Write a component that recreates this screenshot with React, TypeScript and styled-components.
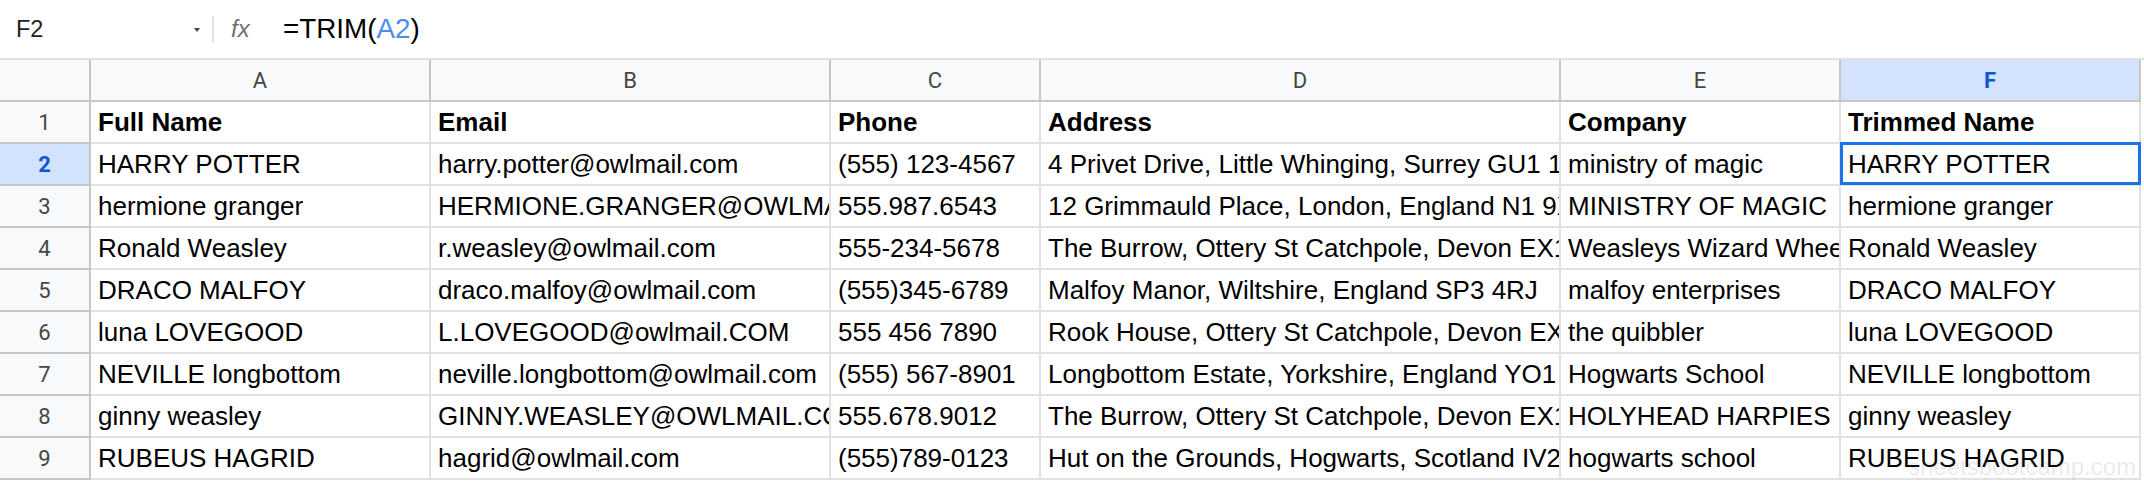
import React from "react";
import styled, { createGlobalStyle, css } from "styled-components";

const GlobalStyle = createGlobalStyle`
  html, body { margin: 0; padding: 0; background: #ffffff; }
  body { font-family: "Liberation Sans", Arial, sans-serif; }
  * { box-sizing: border-box; }
`;

const Page = styled.div`
  position: relative;
  width: 2144px;
  height: 484px;
  overflow: hidden;
  background: #ffffff;
`;

const Toolbar = styled.div`
  display: flex;
  align-items: center;
  height: 60px;
  border-bottom: 2px solid #e1e3e1;
`;

const NameBox = styled.div`
  display: flex;
  align-items: center;
  justify-content: space-between;
  width: 212px;
  padding: 0 12px 0 16px;
  font-family: "Liberation Sans", Arial, sans-serif;
  font-size: 23.5px;
  color: #1f1f1f;
`;

const Caret = styled.span`
  width: 0;
  height: 0;
  border-left: 3px solid transparent;
  border-right: 3px solid transparent;
  border-top: 4px solid #444746;
  margin-top: 1px;
`;

const Divider = styled.div`
  width: 2px;
  height: 27px;
  background: #e1e3e1;
`;

const FxLabel = styled.span`
  margin-left: 17px;
  width: 52px;
  font-family: "Liberation Sans", Arial, sans-serif;
  font-style: italic;
  font-size: 24px;
  color: #6f7370;
`;

const FormulaText = styled.span`
  font-family: "Liberation Sans", Arial, sans-serif;
  font-size: 27.8px;
  color: #000000;
`;

const RefToken = styled.span`
  color: #4a8df0;
`;

const Sheet = styled.div`
  display: grid;
  grid-template-columns: 91px 340px 400px 210px 520px 280px 300px;
  grid-auto-rows: 42px;
`;

const headerBase = css`
  background: #f8f9fa;
  border-right: 2px solid #c4c7c5;
  border-bottom: 2px solid #c4c7c5;
  font-family: Roboto, "Liberation Sans", sans-serif;
  font-size: 22px;
  color: #444746;
  display: flex;
  align-items: center;
  justify-content: center;
`;

const Corner = styled.div`
  ${headerBase};
`;

const ColHeader = styled.div<{ $active?: boolean }>`
  ${headerBase};
  ${(p) =>
    p.$active &&
    css`
      background: #d3e3fd;
      color: #0b57d0;
      font-weight: 700;
    `}
`;

const RowHeader = styled.div<{ $active?: boolean }>`
  ${headerBase};
  ${(p) =>
    p.$active &&
    css`
      background: #d3e3fd;
      color: #0b57d0;
      font-weight: 700;
    `}
`;

const Cell = styled.div<{ $bold?: boolean; $selected?: boolean }>`
  position: relative;
  display: flex;
  align-items: center;
  padding: 0 7px;
  border-right: 2px solid #e1e1e1;
  border-bottom: 2px solid #e1e1e1;
  font-family: "Liberation Sans", Arial, sans-serif;
  font-size: 26px;
  font-weight: ${(p) => (p.$bold ? 700 : 400)};
  color: #000000;
  white-space: nowrap;
  overflow: ${(p) => (p.$selected ? "visible" : "hidden")};
  ${(p) =>
    p.$selected &&
    css`
      z-index: 2;
      &::after {
        content: "";
        position: absolute;
        top: -2px;
        left: -1px;
        right: -2px;
        bottom: -1px;
        border: 3px solid #1a73e8;
        pointer-events: none;
      }
    `}
`;

const CellText = styled.span`
  overflow: hidden;
`;

const FillHandle = styled.span`
  position: absolute;
  right: 1px;
  bottom: 2px;
  width: 4px;
  height: 4px;
  background: #ffffff;
  border-radius: 1px 0 0 0;
  z-index: 3;
`;

const Watermark = styled.div`
  position: absolute;
  left: 1908px;
  top: 453px;
  font-family: "Liberation Sans", Arial, sans-serif;
  font-size: 24px;
  color: rgba(120, 120, 120, 0.16);
  white-space: nowrap;
  pointer-events: none;
`;

const columns = ["A", "B", "C", "D", "E", "F"];

const headerRow = ["Full Name", "Email", "Phone", "Address", "Company", "Trimmed Name"];

const rows: string[][] = [
  ["HARRY POTTER", "harry.potter@owlmail.com", "(555) 123-4567", "4 Privet Drive, Little Whinging, Surrey GU1 1AA", "ministry of magic", "HARRY POTTER"],
  ["hermione granger", "HERMIONE.GRANGER@OWLMAIL.COM", "555.987.6543", "12 Grimmauld Place, London, England N1 9XY", "MINISTRY OF MAGIC", "hermione granger"],
  ["Ronald Weasley", "r.weasley@owlmail.com", "555-234-5678", "The Burrow, Ottery St Catchpole, Devon EX11 1AA", "Weasleys Wizard Wheezes", "Ronald Weasley"],
  ["DRACO MALFOY", "draco.malfoy@owlmail.com", "(555)345-6789", "Malfoy Manor, Wiltshire, England SP3 4RJ", "malfoy enterprises", "DRACO MALFOY"],
  ["luna LOVEGOOD", "L.LOVEGOOD@owlmail.COM", "555 456 7890", "Rook House, Ottery St Catchpole, Devon EX11 1AB", "the quibbler", "luna LOVEGOOD"],
  ["NEVILLE longbottom", "neville.longbottom@owlmail.com", "(555) 567-8901", "Longbottom Estate, Yorkshire, England YO1 7HH", "Hogwarts School", "NEVILLE longbottom"],
  ["ginny weasley", "GINNY.WEASLEY@OWLMAIL.COM", "555.678.9012", "The Burrow, Ottery St Catchpole, Devon EX11 1AA", "HOLYHEAD HARPIES", "ginny weasley"],
  ["RUBEUS HAGRID", "hagrid@owlmail.com", "(555)789-0123", "Hut on the Grounds, Hogwarts, Scotland IV27 4XY", "hogwarts school", "RUBEUS HAGRID"],
];

export default function App() {
  return (
    <Page>
      <GlobalStyle />
      <Toolbar>
        <NameBox>
          <span>F2</span>
          <Caret />
        </NameBox>
        <Divider />
        <FxLabel>fx</FxLabel>
        <FormulaText>
          =TRIM(<RefToken>A2</RefToken>)
        </FormulaText>
      </Toolbar>
      <Sheet>
        <Corner />
        {columns.map((c) => (
          <ColHeader key={c} $active={c === "F"}>
            {c}
          </ColHeader>
        ))}
        <RowHeader>1</RowHeader>
        {headerRow.map((h) => (
          <Cell key={h} $bold>
            {h}
          </Cell>
        ))}
        {rows.map((r, i) => {
          const rowNum = i + 2;
          return (
            <React.Fragment key={rowNum}>
              <RowHeader $active={rowNum === 2}>{rowNum}</RowHeader>
              {r.map((v, j) => {
                const selected = rowNum === 2 && j === 5;
                return (
                  <Cell key={j} $selected={selected}>
                    {selected ? <CellText>{v}</CellText> : v}
                    {selected && <FillHandle />}
                  </Cell>
                );
              })}
            </React.Fragment>
          );
        })}
      </Sheet>
      <Watermark>sheetsbootcamp.com</Watermark>
    </Page>
  );
}
